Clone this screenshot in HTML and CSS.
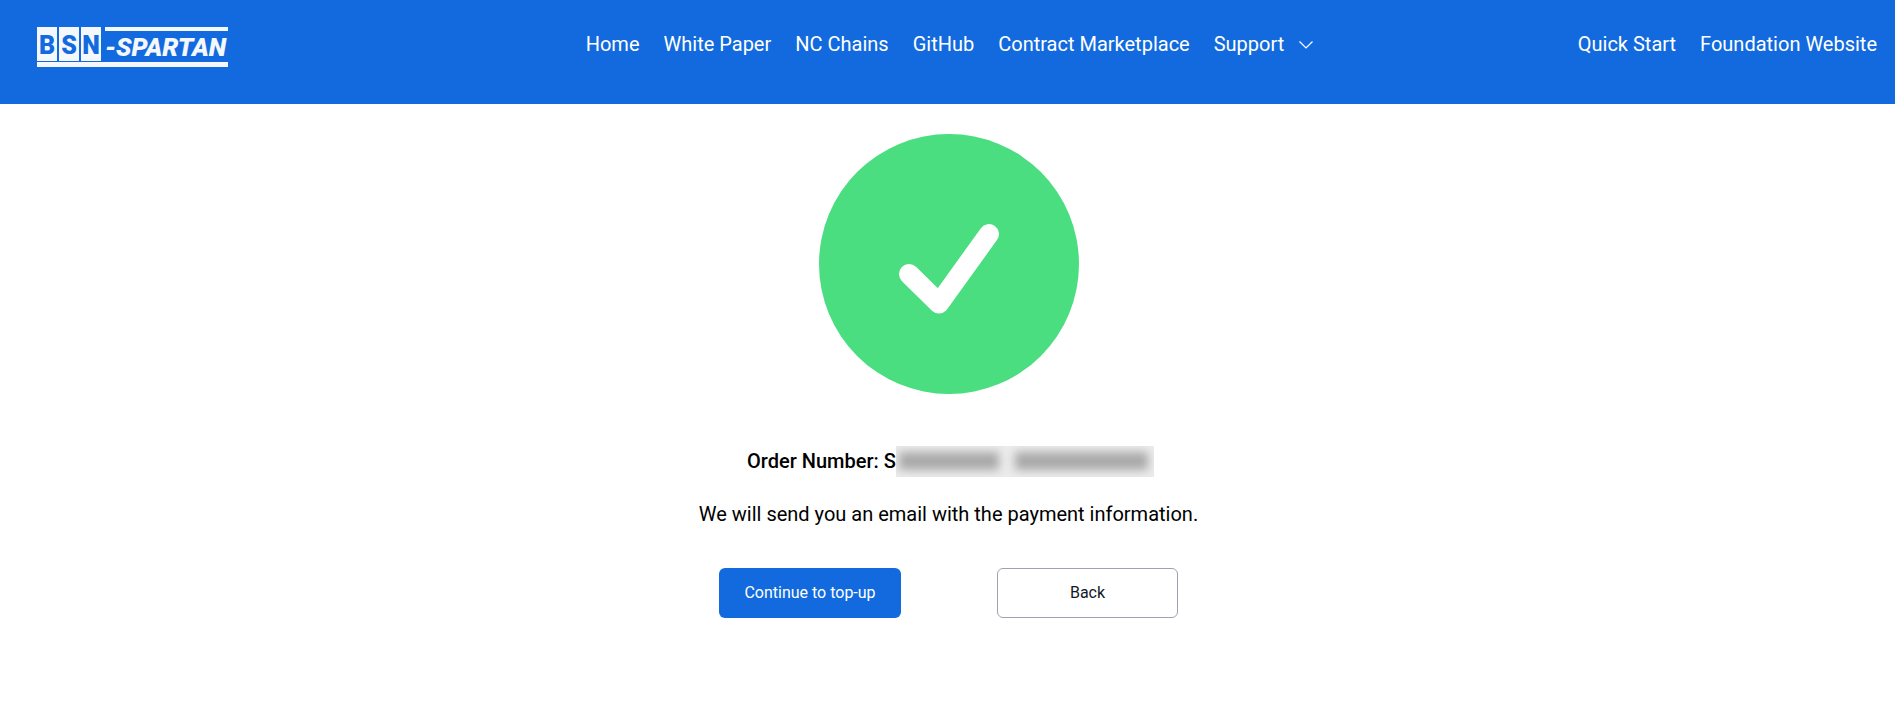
FILE: index.html
```html
<!DOCTYPE html>
<html lang="en">
<head>
<meta charset="utf-8">
<title>BSN-Spartan</title>
<link rel="stylesheet" href="styles.css">
</head>
<body>
<header class="header">
  <a class="logo" href="#">
    <span class="logo-top">
      <span class="logo-box">B</span><span class="logo-box">S</span><span class="logo-box">N</span>
      <span class="logo-side">
        <span class="logo-bar"></span>
        <span class="logo-name">-SPARTAN</span>
      </span>
    </span>
    <span class="logo-bar logo-bottom"></span>
  </a>
  <nav class="nav nav-main">
    <a href="#">Home</a>
    <a href="#">White Paper</a>
    <a href="#">NC Chains</a>
    <a href="#">GitHub</a>
    <a href="#">Contract Marketplace</a>
    <a href="#" class="dropdown">Support
      <svg class="chevron" viewBox="0 0 16 10" width="16" height="10" aria-hidden="true"><path d="M1.5 1.5 8 8l6.5-6.5" fill="none" stroke="#fff" stroke-width="1.2"/></svg>
    </a>
  </nav>
  <nav class="nav nav-right">
    <a href="#">Quick Start</a>
    <a href="#">Foundation Website</a>
  </nav>
</header>
<main class="main">
  <svg class="success" viewBox="0 0 260 260" width="260" height="260" aria-hidden="true">
    <circle cx="130" cy="130" r="130" fill="#4ade80"/>
    <path d="M90 140 120 169.500 170 100" fill="none" stroke="#fff" stroke-width="20" stroke-linecap="round" stroke-linejoin="round"/>
  </svg>
  <p class="order">Order Number: S<span class="redacted" aria-hidden="true"><span class="smudge smudge-a"></span><span class="smudge smudge-b"></span></span></p>
  <p class="note">We will send you an email with the payment information.</p>
  <div class="actions">
    <button class="btn btn-primary" type="button">Continue to top-up</button>
    <button class="btn btn-outline" type="button">Back</button>
  </div>
</main>
</body>
</html>
```
FILE: styles.css
```css
* { box-sizing: border-box; }
html, body { margin: 0; padding: 0; }
body {
  background: #fff;
  color: #000;
  font-family: Roboto, "Liberation Sans", sans-serif;
  min-height: 710px;
}
a { color: inherit; text-decoration: none; }

.header {
  height: 104px;
  background: #126ade;
  color: #fff;
  display: grid;
  grid-template-columns: 1fr auto 1fr;
  align-items: center;
  padding: 0 18px 0 37px;
}
.nav {
  display: flex;
  align-items: center;
  gap: 24px;
  font-size: 20px;
  line-height: 24px;
  padding-bottom: 16px;
}
.nav-main { margin-right: 14px; }
.nav-right { justify-self: end; }
.dropdown { display: flex; align-items: center; gap: 14px; }
.chevron { display: block; margin-top: 1px; }

.logo {
  display: flex;
  flex-direction: column;
  width: 191px;
  gap: 1px;
  margin-bottom: 10px;
}
.logo-top { display: flex; height: 34px; gap: 2px; }
.logo-box {
  width: 20px;
  background: #f4f7fc;
  color: #126ade;
  font-size: 25px;
  font-weight: 900;
  line-height: 37px;
  text-align: center;
}
.logo-side {
  flex: 1;
  display: flex;
  flex-direction: column;
  margin-left: 2px;
  min-width: 0;
}
.logo-bar { display: block; height: 4px; background: #f4f7fc; flex: none; }
.logo-name {
  color: #f4f7fc;
  font-size: 25.5px;
  font-weight: 900;
  font-style: italic;
  line-height: 32px;
  white-space: nowrap;
}
.logo-bottom { height: 5px; }

.main {
  display: flex;
  flex-direction: column;
  align-items: center;
  padding: 30px 0 0 2px;
}
.success { display: block; }
.order {
  margin: 51px 0 0 3px;
  height: 32px;
  display: flex;
  align-items: center;
  font-size: 20px;
  font-weight: 500;
}
.redacted {
  width: 258px;
  height: 31px;
  display: flex;
  align-items: center;
  gap: 16px;
  padding: 0 6px 0 3px;
  overflow: hidden;
  background: #ececec;
  margin-right: -1px;
}
.smudge {
  height: 18px;
  background: #a9a9a9;
  filter: blur(5px);
}
.smudge-a { width: 100px; }
.smudge-b { flex: 1; }
.note {
  margin: 21px 0 0;
  font-size: 20px;
  line-height: 32px;
}
.actions {
  display: flex;
  gap: 96px;
  margin-top: 38px;
}
.btn {
  height: 50px;
  padding: 0 0 1px;
  border-radius: 6px;
  font-family: inherit;
  font-size: 16px;
  cursor: pointer;
}
.btn-primary { width: 182px; background: #126ade; border: 0; color: #fff; }
.btn-outline { width: 181px; background: #fff; border: 1px solid #9ca3af; color: #111827; }
```
